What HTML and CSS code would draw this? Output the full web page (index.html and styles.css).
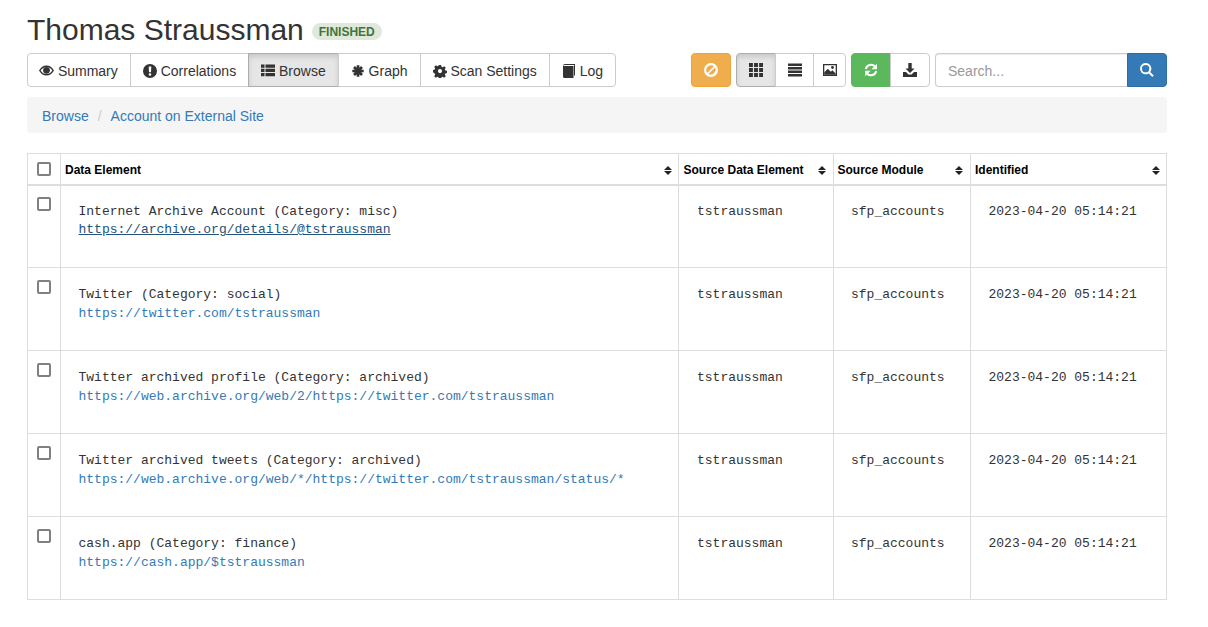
FILE: index.html
```html
<!DOCTYPE html>
<html lang="en">
<head>
<meta charset="utf-8">
<title>Thomas Straussman</title>
<link rel="stylesheet" href="styles.css">
</head>
<body>
<main class="page">
  <header class="title-row">
    <h2 class="title">Thomas Straussman</h2>
    <span class="status">FINISHED</span>
  </header>

  <div class="toolbar">
    <nav class="btn-group">
      <a class="btn"><svg class="ic ic-eye" viewBox="0 0 16 16"><path fill-rule="evenodd" d="M8 2.600c3.400 0 6.200 2.100 8 5.400-1.800 3.300-4.600 5.400-8 5.400S1.800 11.300 0 8c1.800-3.300 4.600-5.400 8-5.400zM8 4.200C5.500 4.200 3.300 5.600 1.700 8c1.600 2.400 3.800 3.800 6.300 3.800s4.700-1.400 6.300-3.800C12.700 5.600 10.500 4.200 8 4.200z"/><circle cx="8" cy="7.800" r="3.600"/></svg> Summary</a>
      <a class="btn"><svg class="ic" viewBox="1 1 14 14"><path fill-rule="evenodd" d="M8 1a7 7 0 1 1 0 14A7 7 0 0 1 8 1zM6.700 3.500l.3 5.800h2l.3-5.800zM8 10.200a1.300 1.300 0 1 0 0 2.600 1.300 1.300 0 0 0 0-2.600z"/></svg> Correlations</a>
      <a class="btn active"><svg class="ic" viewBox="1 1.500 14 14"><path d="M1 2h3.500v3.200H1zM5.500 2H15v3.200H5.500zM1 6.300h3.500v3.200H1zM5.500 6.300H15v3.200H5.500zM1 10.600h3.500v3.200H1zM5.500 10.600H15v3.200H5.500z"/></svg> Browse</a>
      <a class="btn"><svg class="ic ic-star" viewBox="0 0 14 14"><path d="M7 1.300v11.400M1.300 7h11.400M3 3l8 8M11 3l-8 8"/></svg> Graph</a>
      <a class="btn"><svg class="ic" viewBox="0 0 16 16"><path fill-rule="evenodd" d="M6.700 1h2.600l.4 2 1.300.6 1.800-1.100 1.800 1.800-1.100 1.800.6 1.300 1.900.4v2.600l-1.900.4-.6 1.300 1.100 1.800-1.800 1.800-1.800-1.100-1.300.5-.4 2H6.700l-.4-2-1.300-.5-1.800 1.100-1.800-1.800 1.100-1.800-.6-1.300L0 9.400V6.800l1.900-.4.600-1.300-1.100-1.800 1.800-1.800L5 2.600l1.300-.6zM8 5.700a2.400 2.400 0 1 0 0 4.800 2.400 2.400 0 0 0 0-4.800z"/></svg> Scan Settings</a>
      <a class="btn"><svg class="ic" viewBox="0 0 14 14"><path d="M3 0h10v11.500h-1V1H3C2 1 1.500 1.300 1.300 2H1c0-1.300.8-2 2-2z"/><path d="M1 2h10.500v12H2.500C1.500 14 1 13.400 1 12.500z"/></svg> Log</a>
    </nav>

    <div class="toolbar-right">
      <a class="btn btn-warning btn-icon orange"><svg class="ic" viewBox="1 1 14 14"><path fill-rule="evenodd" d="M8 1a7 7 0 1 1 0 14A7 7 0 0 1 8 1zM8 3.200A4.800 4.800 0 0 0 4.300 11L11 4.300A4.800 4.800 0 0 0 8 3.200zM11.900 5.400L5.400 11.900A4.800 4.800 0 0 0 11.900 5.400z"/></svg></a>
      <div class="btn-group">
        <a class="btn btn-icon active wide"><svg class="ic" viewBox="1.500 1.500 13 13"><path d="M1.500 1.500h3.600v3.600H1.500zM6.200 1.500h3.600v3.600H6.200zM10.900 1.500h3.600v3.600h-3.600zM1.500 6.200h3.600v3.600H1.500zM6.200 6.200h3.600v3.600H6.200zM10.900 6.200h3.600v3.600h-3.600zM1.500 10.900h3.600v3.600H1.500zM6.200 10.900h3.600v3.600H6.200zM10.900 10.900h3.600v3.600h-3.600z"/></svg></a>
        <a class="btn btn-icon mid"><svg class="ic" viewBox="1 1.500 14 14"><path d="M1 2h14v2.500H1zM1 5.500h14V8H1zM1 9h14v2.500H1zM1 12.500h14V15H1z"/></svg></a>
        <a class="btn btn-icon slim"><svg class="ic" viewBox="1 1 14 14"><path fill-rule="evenodd" d="M1 2h14v12H1zM2.300 3.300v9.400h11.400V3.300z"/><path d="M2.300 12.700v-2.500L5.800 6.700l3 3 1.500-1.500 3.400 3.200v1.300z"/><circle cx="10.500" cy="5.500" r="1.400"/></svg></a>
      </div>
      <div class="btn-group">
        <a class="btn btn-icon btn-success"><svg class="ic" viewBox="0 0 14 14"><path class="arc" d="M1.800 6A5.300 5.300 0 0 1 10.800 3.300M12.200 8A5.300 5.300 0 0 1 3.200 10.700"/><path d="M13 .7v5.600H7.400zM1 13.300V7.700h5.600z"/></svg></a>
        <a class="btn btn-icon"><svg class="ic" viewBox="1 1 14 14"><path d="M6.300 1h3.400v5.500h2.800L8 11 3.500 6.500h2.800z"/><path d="M1 10h3l2.500 2.500h3L12 10h3v5H1z"/></svg></a>
      </div>
      <form class="search">
        <input class="search-input" type="text" placeholder="Search...">
        <button class="search-btn" type="button" aria-label="Search"><svg class="ic" viewBox="1 1 14.400 14.400"><path fill-rule="evenodd" d="M6.800 1a5.800 5.800 0 0 1 4.700 9.200l3.700 3.700-1.500 1.500-3.700-3.700A5.800 5.800 0 1 1 6.800 1zM6.800 3a3.800 3.800 0 1 0 0 7.600 3.800 3.800 0 0 0 0-7.600z"/></svg></button>
      </form>
    </div>
  </div>

  <ol class="breadcrumb">
    <li><a>Browse</a></li>
    <li class="sep">/</li>
    <li><a>Account on External Site</a></li>
  </ol>

  <table class="grid">
    <colgroup>
      <col class="c-check"><col class="c-data"><col class="c-source"><col class="c-module"><col class="c-time">
    </colgroup>
    <thead>
      <tr>
        <th class="check"><input class="box" type="checkbox"></th>
        <th><span class="th-in">Data Element<i class="sort"></i></span></th>
        <th><span class="th-in">Source Data Element<i class="sort"></i></span></th>
        <th><span class="th-in">Source Module<i class="sort"></i></span></th>
        <th><span class="th-in">Identified<i class="sort"></i></span></th>
      </tr>
    </thead>
    <tbody>
      <tr>
        <td class="check"><input class="box" type="checkbox"></td>
        <td><pre class="mono">Internet Archive Account (Category: misc)
<a class="hover">https://archive.org/details/@tstraussman</a></pre></td>
        <td><pre class="mono">tstraussman</pre></td>
        <td><pre class="mono">sfp_accounts</pre></td>
        <td><pre class="mono">2023-04-20 05:14:21</pre></td>
      </tr>
      <tr>
        <td class="check"><input class="box" type="checkbox"></td>
        <td><pre class="mono">Twitter (Category: social)
<a>https://twitter.com/tstraussman</a></pre></td>
        <td><pre class="mono">tstraussman</pre></td>
        <td><pre class="mono">sfp_accounts</pre></td>
        <td><pre class="mono">2023-04-20 05:14:21</pre></td>
      </tr>
      <tr>
        <td class="check"><input class="box" type="checkbox"></td>
        <td><pre class="mono">Twitter archived profile (Category: archived)
<a>https://web.archive.org/web/2/https://twitter.com/tstraussman</a></pre></td>
        <td><pre class="mono">tstraussman</pre></td>
        <td><pre class="mono">sfp_accounts</pre></td>
        <td><pre class="mono">2023-04-20 05:14:21</pre></td>
      </tr>
      <tr>
        <td class="check"><input class="box" type="checkbox"></td>
        <td><pre class="mono">Twitter archived tweets (Category: archived)
<a>https://web.archive.org/web/*/https://twitter.com/tstraussman/status/*</a></pre></td>
        <td><pre class="mono">tstraussman</pre></td>
        <td><pre class="mono">sfp_accounts</pre></td>
        <td><pre class="mono">2023-04-20 05:14:21</pre></td>
      </tr>
      <tr>
        <td class="check"><input class="box" type="checkbox"></td>
        <td><pre class="mono">cash.app (Category: finance)
<a>https://cash.app/$tstraussman</a></pre></td>
        <td><pre class="mono">tstraussman</pre></td>
        <td><pre class="mono">sfp_accounts</pre></td>
        <td><pre class="mono">2023-04-20 05:14:21</pre></td>
      </tr>
    </tbody>
  </table>
</main>
</body>
</html>
```

FILE: styles.css
```css
* { box-sizing: border-box; }

html, body { margin: 0; background: #fff; }

body {
  font-family: "Liberation Sans", Arial, sans-serif;
  font-size: 14px;
  line-height: 20px;
  color: #333;
}

.page {
  width: 1140px;
  margin-left: 27px;
  padding-top: 13px;
}

.title-row {
  display: flex;
  align-items: center;
  gap: 8px;
  height: 33px;
}

.title {
  margin: 0;
  font-size: 30px;
  font-weight: 400;
  line-height: 33px;
}

.status {
  display: block;
  width: 70px;
  height: 17px;
  margin-top: 3px;
  border-radius: 9px;
  background: #dfe8da;
  color: #3c763d;
  font-size: 12px;
  font-weight: 700;
  line-height: 18px;
  text-align: center;
}

.toolbar {
  display: flex;
  justify-content: space-between;
  margin-top: 7px;
}

.toolbar-right {
  display: flex;
  gap: 5px;
}

.btn-group { display: flex; }

.btn {
  display: flex;
  align-items: center;
  gap: 3.890px;
  height: 34px;
  padding: 1px 12px 0;
  border: 1px solid #ccc;
  margin-left: -1px;
  background: #fff;
  color: #333;
  white-space: nowrap;
}

.btn-group .btn:first-child {
  margin-left: 0;
  border-radius: 4px 0 0 4px;
}

.btn-group .btn:last-child { border-radius: 0 4px 4px 0; }

.btn.active {
  background: #e6e6e6;
  border-color: #adadad;
  box-shadow: inset 0 3px 5px rgba(0, 0, 0, .125);
}

.btn-icon {
  justify-content: center;
  width: 40px;
  padding: 0;
}

.btn-icon.wide { width: 40px; }
.btn-icon.mid { width: 39px; }
.btn-icon.slim { width: 33px; }

.btn-warning.orange {
  margin-left: 0;
  border-color: #eea236;
  border-radius: 4px;
  background: #f0ad4e;
  color: #fff;
}

.btn-group .btn-success {
  border-color: #5cb85c;
  background: #5cb85c;
  color: #fff;
}

.ic {
  flex: none;
  width: 14px;
  height: 14px;
  fill: currentColor;
}

.ic-eye {
  width: 15px;
  height: 15px;
  margin-left: -1px;
}

.ic-star path {
  fill: none;
  stroke: currentColor;
  stroke-width: 2.700;
}

.ic .arc {
  fill: none;
  stroke: currentColor;
  stroke-width: 2;
}

.search {
  display: flex;
  width: 232px;
}

.search-input {
  flex: 1;
  min-width: 0;
  height: 34px;
  padding: 7px 12px 5px;
  border: 1px solid #ccc;
  border-right: 0;
  border-radius: 4px 0 0 4px;
  box-shadow: inset 0 1px 1px rgba(0, 0, 0, .075);
  color: #555;
  font: 14px/20px "Liberation Sans", Arial, sans-serif;
  outline: 0;
}

.search-input::placeholder { color: #999; opacity: 1; }

.search-btn {
  display: flex;
  align-items: center;
  justify-content: center;
  width: 40px;
  height: 34px;
  padding: 0;
  border: 1px solid #2e6da4;
  border-radius: 0 4px 4px 0;
  background: #337ab7;
  color: #fff;
}

.breadcrumb {
  display: flex;
  gap: 9px;
  height: 36px;
  margin: 10px 0 20px;
  padding: 9px 15px 7px;
  border-radius: 4px;
  background: #f5f5f5;
  list-style: none;
}

.breadcrumb a { color: #337ab7; }
.breadcrumb .sep { color: #ccc; }

.grid {
  width: 1139px;
  border-collapse: collapse;
  table-layout: fixed;
}

.c-check { width: 33px; }
.c-data { width: 618px; }
.c-source { width: 155px; }
.c-module { width: 137px; }
.c-time { width: 196px; }

.grid th, .grid td {
  border: 1px solid #ddd;
  padding: 0;
  vertical-align: top;
  text-align: left;
}

.grid thead th {
  height: 31px;
  padding-top: 4px;
  border-bottom-width: 2px;
  color: #000;
  font-size: 12px;
  font-weight: 700;
  line-height: 17px;
  vertical-align: middle;
}

.th-in {
  display: flex;
  align-items: center;
  justify-content: space-between;
  padding: 0 6px 0 4px;
  white-space: nowrap;
}

.grid th:nth-child(3) .th-in { padding: 0 7px 0 4.500px; }
.grid th:nth-child(4) .th-in { padding: 0 7px 0 3.500px; }

.sort {
  position: relative;
  display: block;
  width: 8px;
  height: 9px;
}

.sort::before, .sort::after {
  content: "";
  position: absolute;
  left: 0;
  border-left: 4px solid transparent;
  border-right: 4px solid transparent;
}

.sort::before { top: 0; border-bottom: 4px solid #222; }
.sort::after { bottom: 0; border-top: 4px solid #222; }

.grid tbody tr { height: 83px; }

.grid .check { text-align: center; }
.grid thead .check { padding-top: 0; line-height: 0; }
.grid tbody .check { padding-top: 12px; }
.grid tbody tr:first-child .check { padding-top: 11px; }

.box {
  appearance: none;
  display: inline-block;
  width: 14px;
  height: 14px;
  margin: 0;
  border: 2px solid #808080;
  border-radius: 2px;
  background: #fff;
  vertical-align: top;
}

.mono {
  margin: 0;
  padding: 18px 9px 9px 17.500px;
  color: #333;
  font-family: "Liberation Mono", "Courier New", monospace;
  font-size: 13px;
  line-height: 18.570px;
  white-space: pre;
}

.grid td:nth-child(3) .mono { padding-left: 18px; }
.grid td:nth-child(4) .mono { padding-left: 17px; }

.grid tbody tr:first-child .mono { padding-top: 17px; }

.mono a { color: #337ab7; }
.mono a.hover { color: #23527c; text-decoration: underline; }
```
